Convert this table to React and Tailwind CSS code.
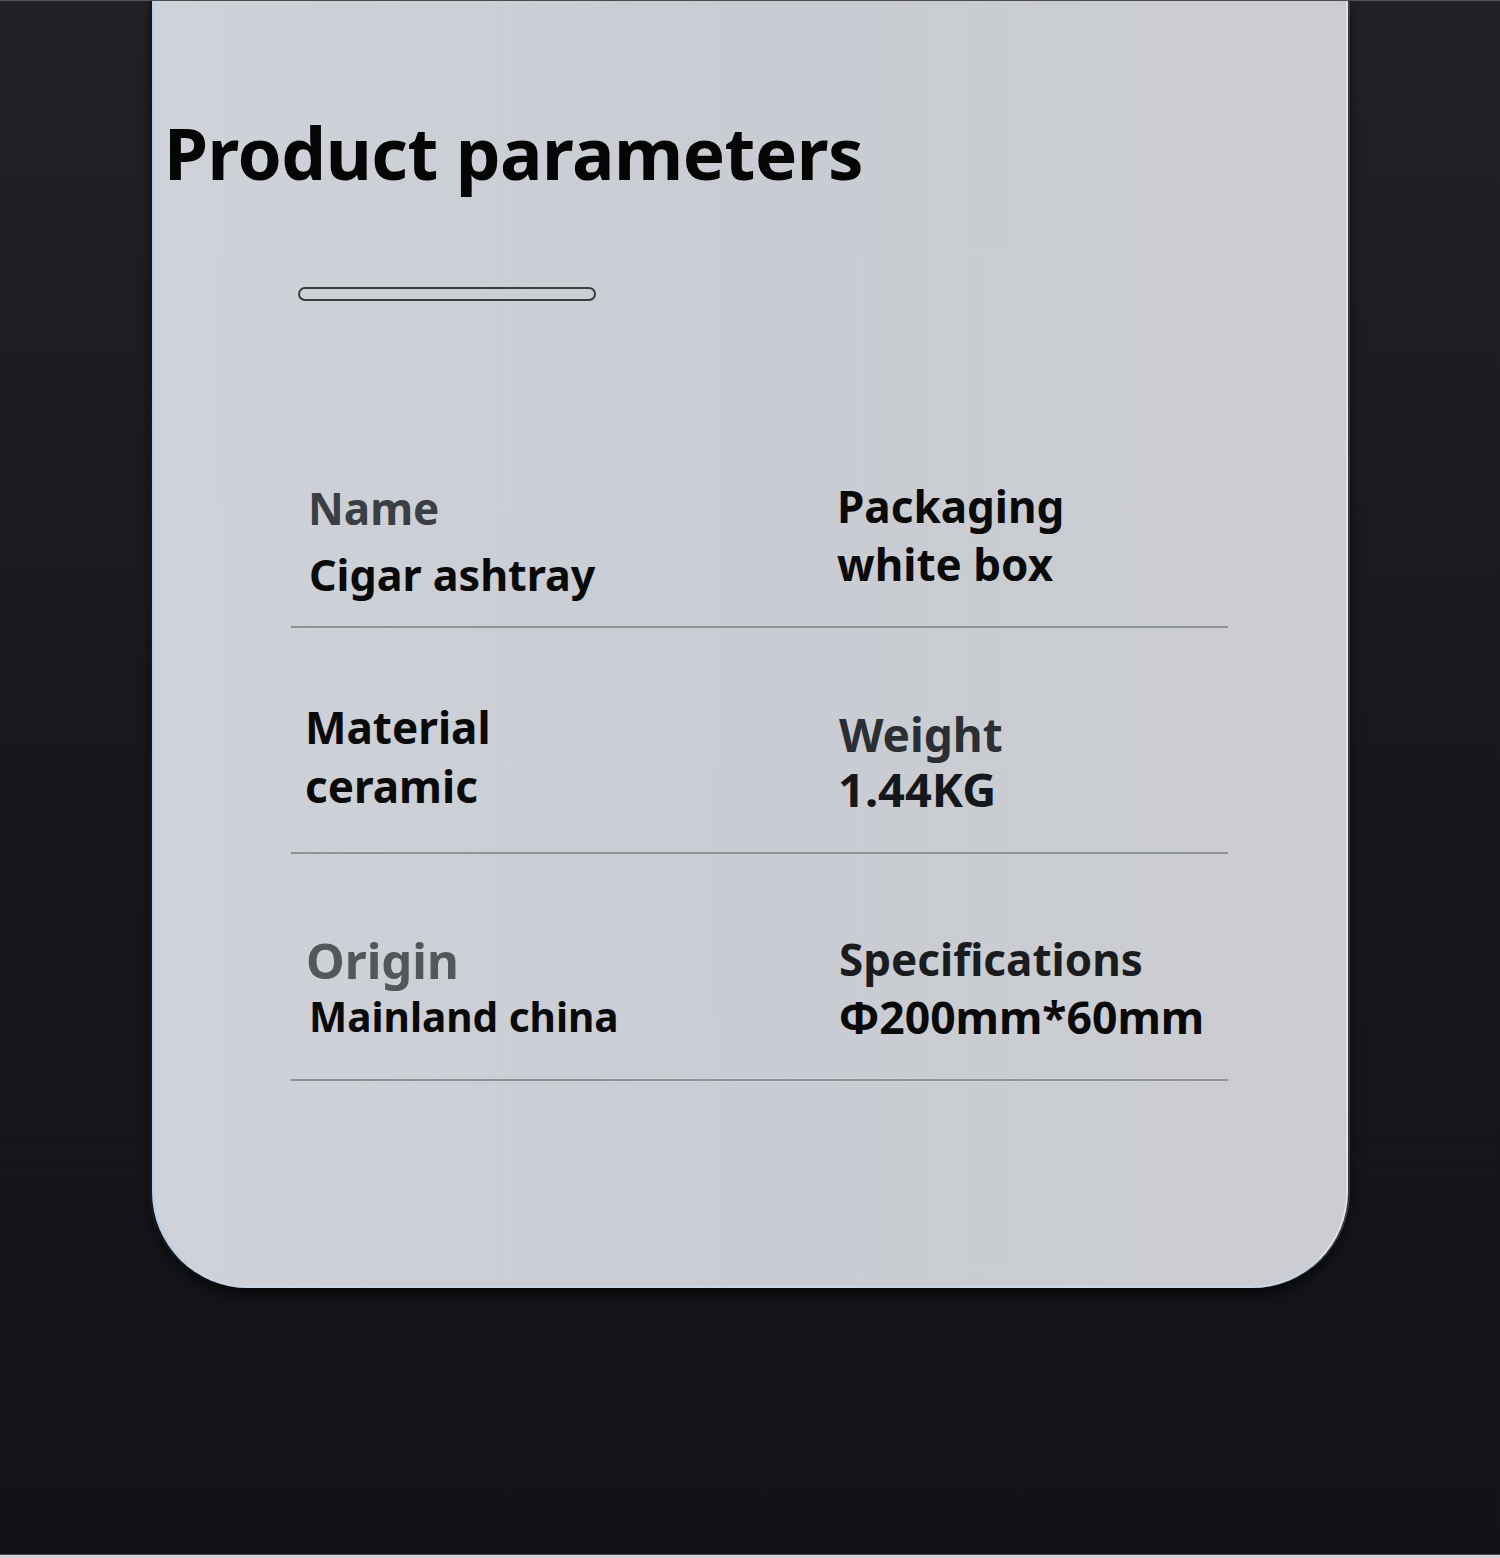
export default function App() {
  const font = { fontFamily: '"Noto Sans", "Open Sans", sans-serif' };
  return (
    <div
      className="w-[1500px] h-[1558px] flex flex-col bg-gradient-to-b from-[#212226] via-[#17181c] to-[#121318] overflow-hidden"
      style={font}
    >
      <div className="h-px bg-[#55565a] shrink-0" />
      <div className="mx-[152px] flex shrink-0">
        <div className="flex-1 h-[1287px] bg-gradient-to-r from-[#cfd2d8] via-[#c9ccd2] to-[#cbcdd2] rounded-b-[96px] border-l-[3px] border-l-[#bcd0e6] border-r-[2px] border-r-[#e2e3e6] border-b-[2px] border-b-[#c9d7e7] shadow-[2px_0_0_#3a3b3f,-3px_0_0_#16171a,0_6px_14px_rgba(0,0,0,0.7)] flex flex-col">
          <h1 className="mt-[116px] ml-[9px] text-[71px] leading-none font-bold text-[#050505] tracking-[-0.5px]">
            Product parameters
          </h1>
          <div className="mt-[99px] ml-[143px] w-[298px] h-[14px] rounded-full border-2 border-[#3b3d41]" />
          <div className="mt-[183px] ml-[136px] w-[937px] flex flex-col">
            <Row
              h="h-[144px]"
              left={[
                { t: "Name", c: "text-[#3b3e43]", s: "text-[44px]", mt: "mt-[2px]", ml: "ml-[4px]" },
                { t: "Cigar ashtray", c: "text-[#0a0a0a]", s: "text-[43px]", mt: "mt-[23px]", ml: "ml-[5px]" },
              ]}
              right={[
                { t: "Packaging", c: "text-[#0a0a0a]", s: "text-[44px]", mt: "mt-0", ml: "ml-[2px]" },
                { t: "white box", c: "text-[#0a0a0a]", s: "text-[44px]", mt: "mt-[14px]", ml: "ml-[2px]" },
              ]}
            />
            <Row
              h="h-[226px]"
              left={[
                { t: "Material", c: "text-[#0a0a0a]", s: "text-[44px]", mt: "mt-[77px]", ml: "ml-[1px]" },
                { t: "ceramic", c: "text-[#0a0a0a]", s: "text-[44px]", mt: "mt-[15px]", ml: "ml-[1px]" },
              ]}
              right={[
                { t: "Weight", c: "text-[#2b2e33]", s: "text-[46px]", mt: "mt-[83px]", ml: "ml-[4px]" },
                { t: "1.44KG", c: "text-[#15171a]", s: "text-[47px]", mt: "mt-[9px]", ml: "ml-[3px]" },
              ]}
            />
            <Row
              h="h-[227px]"
              left={[
                { t: "Origin", c: "text-[#53565b]", s: "text-[49px]", mt: "mt-[82px]", ml: "ml-[2px]" },
                { t: "Mainland china", c: "text-[#0a0a0a]", s: "text-[40.5px]", mt: "mt-[12px]", ml: "ml-[5px]" },
              ]}
              right={[
                { t: "Specifications", c: "text-[#1a1c20]", s: "text-[44px]", mt: "mt-[83px]", ml: "ml-[4px]" },
                { t: "Φ200mm*60mm", c: "text-[#0a0a0a]", s: "text-[44.5px]", mt: "mt-[14px]", ml: "ml-[4px]" },
              ]}
            />
          </div>
        </div>
      </div>
      <div className="flex-1" />
      <div className="h-px bg-[#4a4b4e] shrink-0" />
      <div className="h-[3px] bg-[#d4d4d6] shrink-0" />
    </div>
  );
}

function Row({ h, left, right }) {
  return (
    <div className={`${h} grid grid-cols-[544px_1fr] border-b-2 border-[#8f9297]`}>
      <div className="pl-[13px] flex flex-col items-start">
        {left.map((x) => (
          <div key={x.t} className={`${x.mt} ${x.ml} ${x.s} ${x.c} leading-none font-bold whitespace-nowrap`}>
            {x.t}
          </div>
        ))}
      </div>
      <div className="flex flex-col items-start">
        {right.map((x) => (
          <div key={x.t} className={`${x.mt} ${x.ml} ${x.s} ${x.c} leading-none font-bold whitespace-nowrap`}>
            {x.t}
          </div>
        ))}
      </div>
    </div>
  );
}
